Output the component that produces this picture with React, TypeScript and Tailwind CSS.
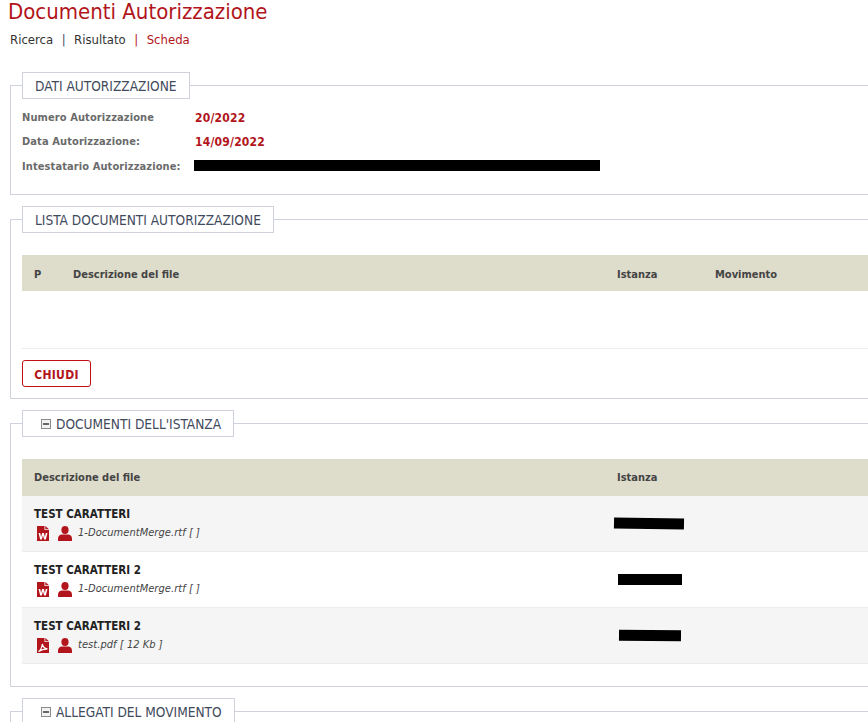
const labelFont = "font-['DejaVu_Sans_Condensed','DejaVu_Sans',sans-serif]";

function MinusBox() {
  return (
    <svg width="10" height="10" viewBox="0 0 10 10" className="shrink-0">
      <rect x="0.5" y="0.5" width="9" height="9" fill="#f2f2f2" stroke="#8a8a8a" />
      <rect x="2" y="4" width="6" height="2" fill="#666" />
    </svg>
  );
}

function WordIcon() {
  return (
    <svg width="12" height="15" viewBox="0 0 12 15" className="shrink-0">
      <path d="M0 0h7.500v4H12v11H0z" fill="#b2151b" />
      <path d="M8.300 0 12 3.300H8.300z" fill="#b2151b" />
      <path d="M1.500 7h1.700l.9 4 1-4h1.800l1 4 .9-4h1.700l-1.700 6.500H7.200L6 9.500 4.800 13.500H3.200z" fill="#fff" />
    </svg>
  );
}

function PdfIcon() {
  return (
    <svg width="12" height="15" viewBox="0 0 12 15" className="shrink-0">
      <path d="M0 0h7.500v4H12v11H0z" fill="#b2151b" />
      <path d="M8.300 0 12 3.300H8.300z" fill="#b2151b" />
      <path d="M1.500 13.500c1.800-1 3.300-3.800 3.800-7.500.6 2.800 2 4.600 5.200 4.800-3 .1-6.200.9-9 2.700z" fill="none" stroke="#fff" strokeWidth="1.200" />
    </svg>
  );
}

function UserIcon() {
  return (
    <svg width="14" height="15" viewBox="0 0 14 15" className="shrink-0">
      <ellipse cx="7" cy="4" rx="3.600" ry="4" fill="#b2151b" />
      <path d="M0 15v-2.500C0 10 2 8.500 4 8.500h6c2 0 4 1.500 4 4V15z" fill="#b2151b" />
    </svg>
  );
}

function Panel({ title, toggle, children, className }: { title: string; toggle?: boolean; children?: React.ReactNode; className?: string }) {
  return (
    <fieldset className={`ml-[10px] border border-r-0 border-[#cfd2dc] ${className ?? ''}`}>
      <legend className={`ml-[11px] flex h-[27px] items-center gap-[5px] border border-[#cfd2dc] bg-white px-3 pt-[1px] text-[13.6px] text-[#3f4a5c] ${labelFont}`}>
        {toggle && <span className="ml-[6px]"><MinusBox /></span>}
        {title}
      </legend>
      {children}
    </fieldset>
  );
}

function InfoRow({ label, children, className }: { label: string; children: React.ReactNode; className?: string }) {
  return (
    <div className={`flex h-6 items-center text-[11px] font-bold tracking-[0.1px] ${labelFont} ${className ?? ''}`}>
      <span className="w-[173px] pt-[2px] text-[#6b6b6b]">{label}</span>
      {children}
    </div>
  );
}

function Value({ children }: { children: React.ReactNode }) {
  return <span className="pt-[2px] text-[12px] tracking-[0.2px] text-[#b2151b]">{children}</span>;
}

function DocRow({ title, file, pdf, striped, bar }: { title: string; file: string; pdf?: boolean; striped?: boolean; bar: string }) {
  return (
    <div className={`flex h-14 border-b border-[#ececec] ${striped ? 'bg-[#f5f5f5]' : 'bg-white'}`}>
      <div className="w-[595px] pl-3 pt-[11px]">
        <div className={`text-[11.5px] font-bold leading-[14px] text-[#222] ${labelFont}`}>{title}</div>
        <div className="mt-[4px] flex items-center pl-[3px]">
          {pdf ? <PdfIcon /> : <WordIcon />}
          <span className="ml-[9px]"><UserIcon /></span>
          <span className={`ml-[6px] text-[11px] italic tracking-[0.05px] text-[#444] ${labelFont}`}>{file}</span>
        </div>
      </div>
      <div className="flex items-center">
        <div className={`h-[11px] bg-black ${bar}`} />
      </div>
    </div>
  );
}

export default function App() {
  return (
    <div className={`h-[722px] w-[868px] overflow-hidden bg-white ${labelFont}`}>
      <h1 className="pl-2 text-[22px] leading-[24px] text-[#b2151b]">Documenti Autorizzazione</h1>
      <div className="mt-[8px] flex h-[16px] items-center pl-[10px] text-[13px] text-[#333]">
        <span>Ricerca</span>
        <span className="mx-[8.500px] text-[#3f4a5c]">|</span>
        <span>Risultato</span>
        <span className="mx-[8.500px] text-[#b2151b]">|</span>
        <span className="text-[#b2151b]">Scheda</span>
      </div>

      <Panel title="DATI AUTORIZZAZIONE" className="mt-[24px] h-[123px]">
        <div className="pl-[11px] pt-[6px]">
          <InfoRow label="Numero Autorizzazione"><Value>20/2022</Value></InfoRow>
          <InfoRow label="Data Autorizzazione:"><Value>14/09/2022</Value></InfoRow>
          <InfoRow label="Intestatario Autorizzazione:" className="mt-[1px]"><div className="mb-[1px] ml-[-1px] h-[11px] w-[406px] bg-black" /></InfoRow>
        </div>
      </Panel>

      <Panel title="LISTA DOCUMENTI AUTORIZZAZIONE" className="mt-[11px] h-[193px]">
        <div className="pl-[11px] pt-[22px]">
          <div className="flex h-[36px] items-center bg-[#dedccb] pl-3 pt-[4px] text-[11px] font-bold text-[#444]">
            <span className="w-[39px]">P</span>
            <span className="w-[544px]">Descrizione del file</span>
            <span className="w-[98px]">Istanza</span>
            <span>Movimento</span>
          </div>
          <div className="h-[58px] border-b border-[#ececec]" />
          <button className="mt-[11px] h-[27px] w-[69px] rounded-[3px] border border-[#c00f16] bg-white pt-[2px] text-[12px] font-bold tracking-[0.3px] text-[#b2151b]">
            CHIUDI
          </button>
        </div>
      </Panel>

      <Panel title="DOCUMENTI DELL'ISTANZA" toggle className="mt-[11px] h-[277px]">
        <div className="pl-[11px] pt-[22px]">
          <div className="flex h-[37px] items-center bg-[#dedccb] pl-3 pt-[2px] text-[11px] font-bold text-[#444]">
            <span className="w-[583px]">Descrizione del file</span>
            <span>Istanza</span>
          </div>
          <DocRow title="TEST CARATTERI" file="1-DocumentMerge.rtf [ ]" striped bar="ml-[-3px] w-[70px] rotate-[1deg]" />
          <DocRow title="TEST CARATTERI 2" file="1-DocumentMerge.rtf [ ]" bar="ml-[1px] w-[64px]" />
          <DocRow title="TEST CARATTERI 2" file="test.pdf [ 12 Kb ]" pdf striped bar="ml-[2px] w-[62px] rotate-[0.5deg]" />
        </div>
      </Panel>

      <Panel title="ALLEGATI DEL MOVIMENTO" toggle className="mt-[11px] h-[60px]" />
    </div>
  );
}
